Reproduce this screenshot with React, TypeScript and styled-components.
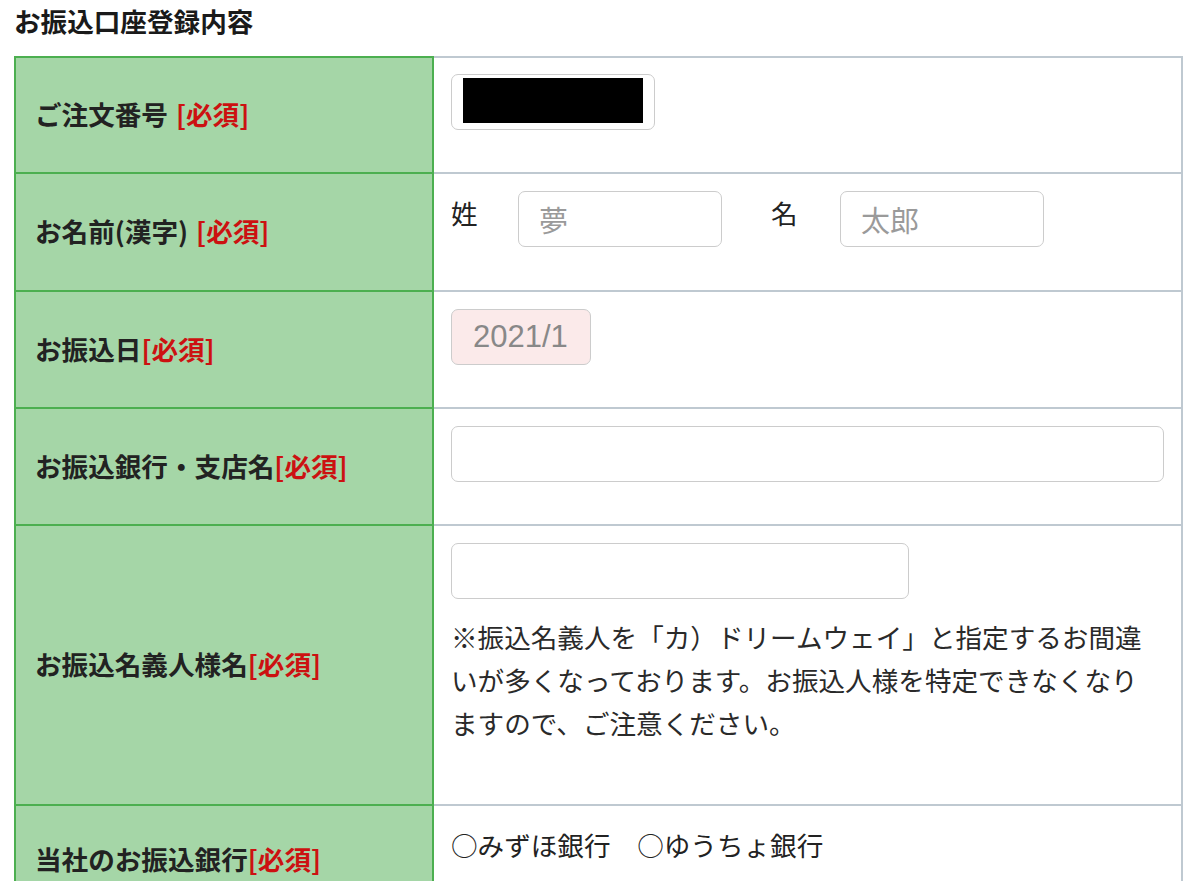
import React from "react";
import styled, { createGlobalStyle } from "styled-components";

const GlobalStyle = createGlobalStyle`
  html, body {
    margin: 0;
    padding: 0;
    background: #ffffff;
  }
  body {
    font-family: "Noto Sans CJK JP", "Noto Sans", sans-serif;
    color: #222;
  }
`;

const GREEN_LINE = "#4caf50";
const GRAY_LINE = "#bfc9d1";

const Page = styled.div`
  padding: 0 0 40px 14px;
`;

const Heading = styled.h2`
  margin: 0;
  height: 56px;
  padding-top: 3px;
  box-sizing: border-box;
  font-size: 26.6px;
  line-height: 36px;
  font-weight: bold;
  color: #1a1a1a;
`;

const Table = styled.div`
  width: 1169px;
  display: flex;
  flex-direction: column;
`;

const Row = styled.div<{ $height: number }>`
  display: grid;
  grid-template-columns: 420px 1fr;
  height: ${(p) => p.$height}px;
`;

const LabelCell = styled.div<{ $first?: boolean }>`
  box-sizing: border-box;
  display: flex;
  align-items: center;
  padding: 0 0 3px 19px;
  background: #a5d6a7;
  border-left: 2px solid ${GREEN_LINE};
  border-right: 2px solid ${GREEN_LINE};
  border-bottom: 2px solid ${GREEN_LINE};
  border-top: ${(p) => (p.$first ? `2px solid ${GREEN_LINE}` : "none")};
  font-size: 26.6px;
  font-weight: bold;
  color: #222;
  white-space: nowrap;
`;

const Required = styled.span<{ $gap?: boolean }>`
  color: #cc1111;
  margin-left: ${(p) => (p.$gap ? "8px" : "0")};
`;

const ValueCell = styled.div<{ $first?: boolean }>`
  box-sizing: border-box;
  padding: ${(p) => (p.$first ? "16px" : "17px")} 17px 0 17px;
  border-right: 2px solid ${GRAY_LINE};
  border-bottom: 2px solid ${GRAY_LINE};
  border-top: ${(p) => (p.$first ? `2px solid ${GRAY_LINE}` : "none")};
  font-size: 26.6px;
  line-height: 43px;
  color: #222;
`;

const TextInput = styled.input<{ $width: number; $tinted?: boolean }>`
  box-sizing: border-box;
  display: block;
  width: ${(p) => p.$width}px;
  height: 56px;
  margin: 0;
  padding: 0 20px;
  border: 1.5px solid #cccccc;
  border-radius: 7px;
  background: ${(p) => (p.$tinted ? "#fbeaea" : "#ffffff")};
  font-family: "Noto Sans CJK JP", "Noto Sans", sans-serif;
  font-size: 29px;
  color: #888;
  outline: none;

  &::placeholder {
    color: #9a9a9a;
  }
`;

const DateInput = styled(TextInput)`
  font-family: "Liberation Sans", "Noto Sans CJK JP", sans-serif;
  font-size: 31px;
  padding: 0 20px 0 21px;
`;

const RedactedField = styled.div`
  box-sizing: border-box;
  width: 204px;
  height: 56px;
  padding: 3px 11px;
  border: 1.5px solid #cccccc;
  border-radius: 7px;
  background: #fff;
`;

const Redaction = styled.div`
  width: 180px;
  height: 45px;
  background: #000;
`;

const NameLine = styled.div`
  display: flex;
  align-items: flex-start;
`;

const NameTag = styled.span<{ $width: number; $offset?: number }>`
  width: ${(p) => p.$width}px;
  margin-left: ${(p) => p.$offset ?? 0}px;
  flex-shrink: 0;
`;

const Note = styled.p`
  margin: 16px 0 0;
  color: #2a2a2a;
`;

const Choices = styled.div`
  color: #222;
  white-space: pre;
`;

export default function App() {
  return (
    <>
      <GlobalStyle />
      <Page>
        <Heading>お振込口座登録内容</Heading>
        <Table>
          <Row $height={118}>
            <LabelCell $first>
              ご注文番号<Required $gap>[必須]</Required>
            </LabelCell>
            <ValueCell $first>
              <RedactedField>
                <Redaction />
              </RedactedField>
            </ValueCell>
          </Row>

          <Row $height={118}>
            <LabelCell>
              お名前(漢字)<Required $gap>[必須]</Required>
            </LabelCell>
            <ValueCell>
              <NameLine>
                <NameTag $width={67}>姓</NameTag>
                <TextInput $width={204} placeholder="夢" />
                <NameTag $width={69} $offset={49}>
                  名
                </NameTag>
                <TextInput $width={204} placeholder="太郎" />
              </NameLine>
            </ValueCell>
          </Row>

          <Row $height={117}>
            <LabelCell>
              お振込日<Required>[必須]</Required>
            </LabelCell>
            <ValueCell>
              <DateInput $width={140} $tinted defaultValue="2021/1" readOnly />
            </ValueCell>
          </Row>

          <Row $height={117}>
            <LabelCell>
              お振込銀行・支店名<Required>[必須]</Required>
            </LabelCell>
            <ValueCell>
              <TextInput $width={713} />
            </ValueCell>
          </Row>

          <Row $height={280}>
            <LabelCell>
              お振込名義人様名<Required>[必須]</Required>
            </LabelCell>
            <ValueCell>
              <TextInput $width={458} />
              <Note>
                ※振込名義人を「カ）ドリームウェイ」と指定するお間違いが多くなっております。お振込人様を特定できなくなりますので、ご注意ください。
              </Note>
            </ValueCell>
          </Row>

          <Row $height={110}>
            <LabelCell>
              当社のお振込銀行<Required>[必須]</Required>
            </LabelCell>
            <ValueCell>
              <Choices>○みずほ銀行　○ゆうちょ銀行</Choices>
            </ValueCell>
          </Row>
        </Table>
      </Page>
    </>
  );
}
